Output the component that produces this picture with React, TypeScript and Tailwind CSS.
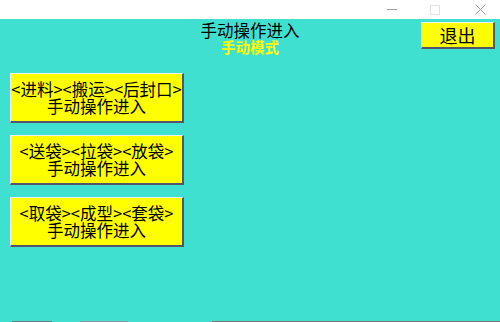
import React from 'react';

const cjk = { fontFamily: '"Noto Sans CJK SC", "Noto Sans", sans-serif' };

const modes = [
  { label: '<进料><搬运><后封口>', gap: 'mt-[12px]' },
  { label: '<送袋><拉袋><放袋>', gap: 'mt-[12px]' },
  { label: '<取袋><成型><套袋>', gap: 'mt-[12px]' },
];

const ModeButton = ({ label }: { label: string }) => (
  <button className="w-[174px] h-[50px] bg-[#ffff00] border-t border-l border-t-[#f0f0f0] border-l-[#f0f0f0] border-r-2 border-b-2 border-r-[#55556a] border-b-[#55556a] flex flex-col items-center justify-center text-black text-[16.5px] leading-[17px]">
    <span className="whitespace-nowrap">{label}</span>
    <span>手动操作进入</span>
  </button>
);

export default function App() {
  return (
    <div className="w-[500px] h-[322px] flex flex-col overflow-hidden bg-white" style={cjk}>
      <div className="h-[19px] bg-white flex items-center justify-end">
        <div className="w-[10px] h-px bg-[#a0a0a0] mr-[33px]" />
        <div className="w-[10px] h-[10px] border border-[#e2e2e2] mr-[35px]" />
        <svg width="11" height="11" viewBox="0 0 11 11" className="mr-[14px]">
          <path d="M0.5 0.5 L10.5 10.5 M10.5 0.5 L0.5 10.5" stroke="#a0a0a0" strokeWidth="1" />
        </svg>
      </div>
      <div className="flex-1 bg-[#40e0d0] flex flex-col">
        <div className="grid grid-cols-[1fr_auto_1fr]">
          <div />
          <div className="flex flex-col items-center pt-[2px]">
            <span className="text-[16.5px] leading-[18px] text-black">手动操作进入</span>
            <span className="text-[14.5px] leading-[15px] font-bold text-[#ffff00]">手动模式</span>
          </div>
          <div className="flex justify-end pt-[3px] pr-[5px]">
            <button className="w-[74px] h-[27px] bg-[#ffff00] border-t border-l border-t-[#f0f0f0] border-l-[#f0f0f0] border-r-2 border-b-2 border-r-[#55556a] border-b-[#55556a] flex items-center justify-center text-[18px] leading-none text-black">
              退出
            </button>
          </div>
        </div>
        <div className="flex flex-col pl-[10px] mt-[19px]">
          {modes.map((m, i) => (
            <div key={i} className={i === 0 ? '' : m.gap}>
              <ModeButton label={m.label} />
            </div>
          ))}
        </div>
        <div className="flex-1" />
        <div className="h-px flex">
          <div className="w-[12px] bg-[#40e0d0]" />
          <div className="w-[40px] bg-[#6c7878]" />
          <div className="w-[28px] bg-[#40e0d0]" />
          <div className="w-[48px] bg-[#8a9494]" />
          <div className="w-[84px] bg-[#40e0d0]" />
          <div className="flex-1 bg-[#7a6e6a]" />
        </div>
      </div>
    </div>
  );
}
